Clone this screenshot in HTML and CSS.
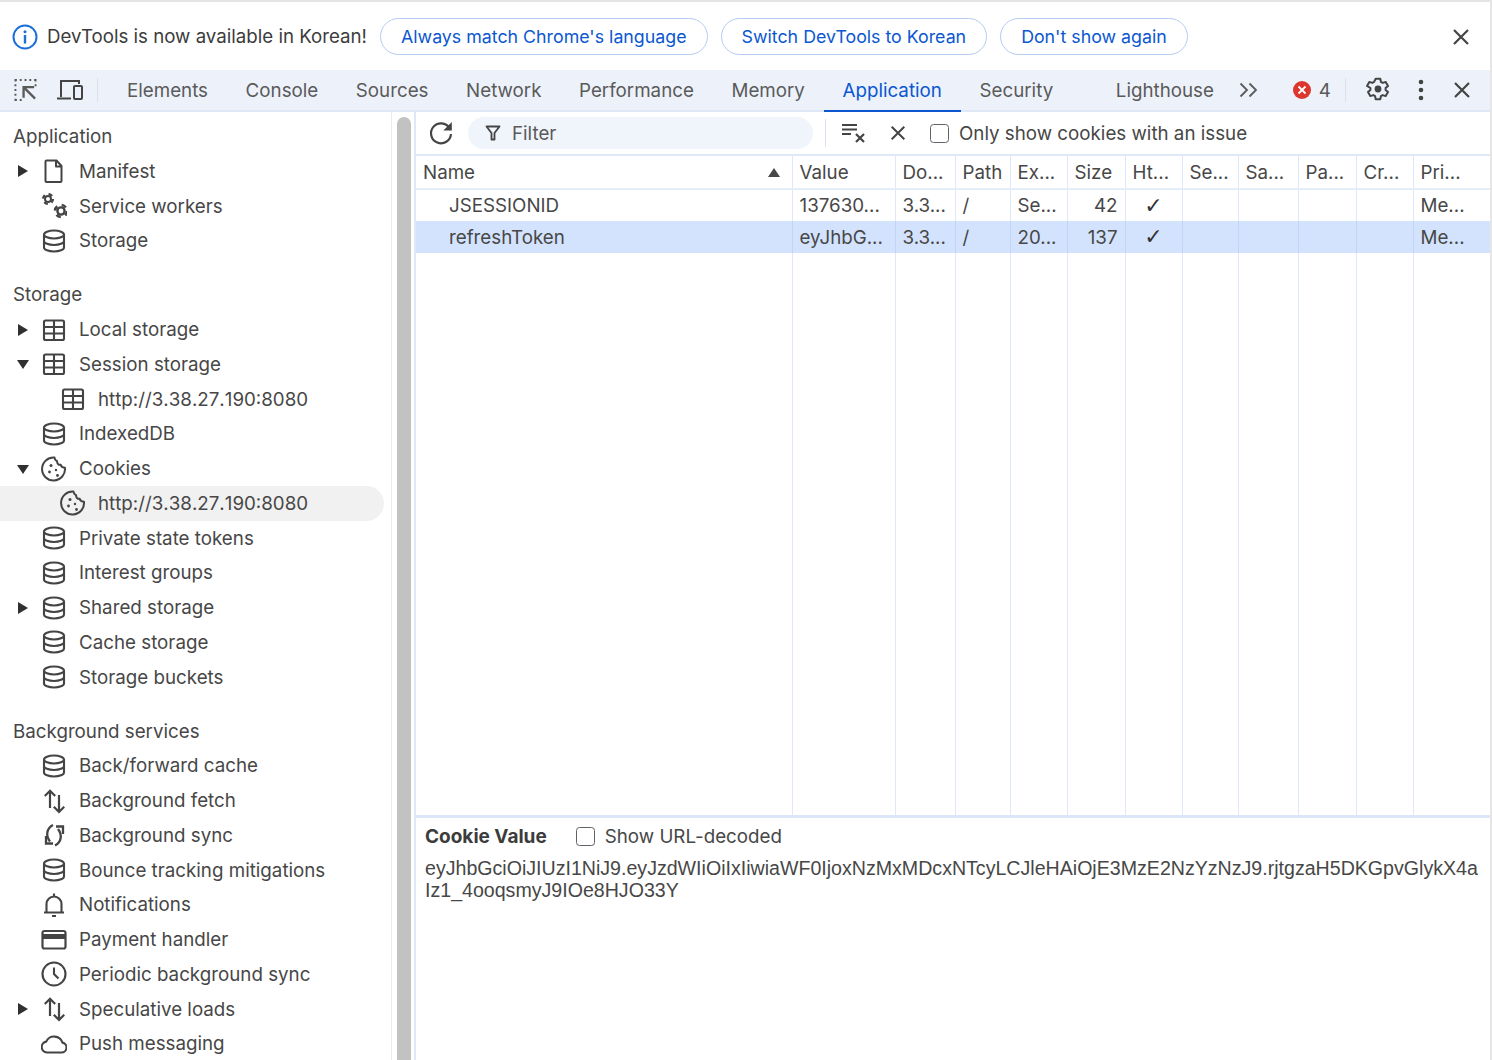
FILE: index.html
```html
<!DOCTYPE html>
<html lang="en">
<head>
<meta charset="utf-8">
<title>DevTools</title>
<link rel="stylesheet" href="styles.css">
</head>
<body>
<svg class="defs" width="0" height="0" aria-hidden="true">
  <symbol id="i-file" viewBox="0 0 26 26"><path d="M5.500 2.500h10l5 5.500v15a1 1 0 0 1-1 1h-14a1 1 0 0 1-1-1V3.500a1 1 0 0 1 1-1zM15 2.500V8.500h5.500" fill="none" stroke="currentColor" stroke-width="2" stroke-linejoin="round"/></symbol>
  <symbol id="i-gears" viewBox="0 0 26 26"><g fill="none" stroke="currentColor"><circle cx="7" cy="6" r="3" stroke-width="2"/><circle cx="7" cy="6" r="5" stroke-width="2.200" stroke-dasharray="3.900 3.950"/><circle cx="20" cy="18" r="3.600" stroke-width="2.400"/><circle cx="20" cy="18" r="6" stroke-width="2.600" stroke-dasharray="4.700 4.720"/></g></symbol>
  <symbol id="i-db" viewBox="0 0 26 26"><g fill="none" stroke="currentColor" stroke-width="2.100"><ellipse cx="13" cy="6.500" rx="10" ry="4"/><path d="M3 6.500v13c0 2.200 4.500 4 10 4s10-1.800 10-4v-13M3 13c0 2.200 4.500 4 10 4s10-1.800 10-4"/></g></symbol>
  <symbol id="i-table" viewBox="0 0 26 26"><g fill="none" stroke="currentColor" stroke-width="2.100"><rect x="3" y="3.500" width="20" height="19.500" rx="1.500"/><path d="M3 10h20M3 16.500h20M13 3.500V23"/></g></symbol>
  <symbol id="i-cookie" viewBox="0 0 26 26"><path d="M13.500 1.500c.2 2 .9 3 2.600 3.600-.2 2.400 1.400 4 3.600 3.700.5 1.900 2 3 4.300 3A11.500 11.500 0 1 1 13.500 1.500z" fill="none" stroke="currentColor" stroke-width="2" stroke-linejoin="round"/><g fill="currentColor"><circle cx="10" cy="9.500" r="1.500"/><circle cx="8.500" cy="16" r="1.400"/><circle cx="15" cy="14" r="1.200"/><circle cx="16.500" cy="19.500" r="1.400"/></g></symbol>
  <symbol id="i-updown" viewBox="0 0 26 26"><path d="M9 20V3M3.800 8 9 2.800 14.200 8M18 7v17M12.800 18.800 18 24l5.200-5.200" fill="none" stroke="currentColor" stroke-width="2.200"/></symbol>
  <symbol id="i-sync" viewBox="0 0 26 26"><g fill="none" stroke="currentColor" stroke-width="2.300"><path d="M12 3C5.500 6.500 4.500 13.500 9 19.500"/><path d="M5 14v7.500h7"/><path d="M14 23.500c6.500-3.500 7.500-10.500 3-16.500"/><path d="M22 12V4.500h-7"/></g></symbol>
  <symbol id="i-bell" viewBox="0 0 26 26"><path d="M5.500 20.500V12a7.500 7.500 0 0 1 15 0v8.500M3 20.500h20M13 1.500V4.500M11 24h4" fill="none" stroke="currentColor" stroke-width="2.100"/></symbol>
  <symbol id="i-card" viewBox="0 0 26 26"><rect x="1.500" y="4" width="23" height="17.500" rx="2" fill="none" stroke="currentColor" stroke-width="2.200"/><rect x="1.500" y="7" width="23" height="5" fill="currentColor"/></symbol>
  <symbol id="i-clock" viewBox="0 0 26 26"><circle cx="13" cy="13" r="11.500" fill="none" stroke="currentColor" stroke-width="2.100"/><path d="M13 6.500V13l4.500 4.500" fill="none" stroke="currentColor" stroke-width="2.100"/></symbol>
  <symbol id="i-cloud" viewBox="0 0 26 26"><path d="M6 21.500h14.500a5 5 0 0 0 1-9.900A8.800 8.800 0 0 0 5.200 10.600 5.500 5.500 0 0 0 6 21.500z" fill="none" stroke="currentColor" stroke-width="2.100"/></symbol>
  <symbol id="i-x" viewBox="0 0 20 20"><path d="M3 3l14 14M17 3 3 17" fill="none" stroke="currentColor" stroke-width="2.200"/></symbol>
</svg>

<div class="infobar">
  <svg class="info-icon" viewBox="0 0 26 26"><circle cx="13" cy="13" r="11.500" fill="none" stroke="currentColor" stroke-width="2"/><circle cx="13" cy="7.800" r="1.500" fill="currentColor"/><rect x="11.800" y="11" width="2.400" height="8.500" fill="currentColor"/></svg>
  <span class="info-text">DevTools is now available in Korean!</span>
  <button class="pill">Always match Chrome's language</button>
  <button class="pill">Switch DevTools to Korean</button>
  <button class="pill">Don't show again</button>
  <svg class="close info-close"><use href="#i-x"/></svg>
</div>

<div class="toolbar">
  <svg class="tool-inspect" viewBox="0 0 24 24"><path d="M1.500 3v-1.500H3M6 1.500h2M11 1.500h2M16 1.500h2M21 1.500h1.500V3M1.500 6v2M1.500 11v2M1.500 16v2M1.500 21v1.500H3M6 22.500h2M22.500 6v2" fill="none" stroke="currentColor" stroke-width="2"/><path d="M21 9H10v11M10.500 9.500 22 21" fill="none" stroke="currentColor" stroke-width="2.400"/></svg>
  <svg class="tool-device" viewBox="0 0 26 24"><path d="M4 19V3h18v3M0 20.500h14" fill="none" stroke="currentColor" stroke-width="2"/><rect x="17" y="8" width="8" height="13" rx="1" fill="none" stroke="currentColor" stroke-width="2"/></svg>
  <span class="vsep"></span>
  <nav class="tabs">
    <span class="tab">Elements</span>
    <span class="tab">Console</span>
    <span class="tab">Sources</span>
    <span class="tab">Network</span>
    <span class="tab">Performance</span>
    <span class="tab">Memory</span>
    <span class="tab active">Application</span>
    <span class="tab">Security</span>
    <span class="tab lighthouse">Lighthouse</span>
  </nav>
  <svg class="chevrons" viewBox="0 0 20 16"><path d="M1.500 1.500 8 8l-6.500 6.500M10.500 1.500 17 8l-6.500 6.500" fill="none" stroke="currentColor" stroke-width="1.800"/></svg>
  <svg class="err-icon" viewBox="0 0 18 18"><circle cx="9" cy="9" r="9" fill="#dc362e"/><path d="M5.500 5.500l7 7M12.500 5.500l-7 7" stroke="#fff" stroke-width="1.800"/></svg>
  <span class="err-count">4</span>
  <span class="vsep vsep-right"></span>
  <svg class="gear" viewBox="0 0 26 26"><path d="M10.700 1.800h4.600l.6 3.100 1.800 1 3-1 2.300 4-2.400 2.100v2l2.400 2.100-2.300 4-3-1-1.800 1-.6 3.100h-4.600l-.6-3.100-1.800-1-3 1-2.300-4 2.400-2.100v-2L2 8.900l2.300-4 3 1 1.800-1z" fill="none" stroke="currentColor" stroke-width="2" stroke-linejoin="round"/><circle cx="13" cy="12" r="3.400" fill="currentColor"/></svg>
  <svg class="dots" viewBox="0 0 6 22"><circle cx="3" cy="3" r="2.300" fill="currentColor"/><circle cx="3" cy="11" r="2.300" fill="currentColor"/><circle cx="3" cy="19" r="2.300" fill="currentColor"/></svg>
  <svg class="close tool-close"><use href="#i-x"/></svg>
</div>

<div class="workspace">
  <aside class="sidebar">
    <div class="tree">
      <section class="group">
        <h2 class="group-title">Application</h2>
        <div class="row"><span class="tri right"></span><svg class="ico"><use href="#i-file"/></svg><span>Manifest</span></div>
        <div class="row"><svg class="ico"><use href="#i-gears"/></svg><span>Service workers</span></div>
        <div class="row"><svg class="ico"><use href="#i-db"/></svg><span>Storage</span></div>
      </section>
      <section class="group">
        <h2 class="group-title">Storage</h2>
        <div class="row"><span class="tri right"></span><svg class="ico"><use href="#i-table"/></svg><span>Local storage</span></div>
        <div class="row"><span class="tri down"></span><svg class="ico"><use href="#i-table"/></svg><span>Session storage</span></div>
        <div class="row nested"><svg class="ico"><use href="#i-table"/></svg><span class="url">http://3.38.27.190:8080</span></div>
        <div class="row"><svg class="ico"><use href="#i-db"/></svg><span>IndexedDB</span></div>
        <div class="row"><span class="tri down"></span><svg class="ico"><use href="#i-cookie"/></svg><span>Cookies</span></div>
        <div class="row nested selected"><svg class="ico"><use href="#i-cookie"/></svg><span class="url">http://3.38.27.190:8080</span></div>
        <div class="row"><svg class="ico"><use href="#i-db"/></svg><span>Private state tokens</span></div>
        <div class="row"><svg class="ico"><use href="#i-db"/></svg><span>Interest groups</span></div>
        <div class="row"><span class="tri right"></span><svg class="ico"><use href="#i-db"/></svg><span>Shared storage</span></div>
        <div class="row"><svg class="ico"><use href="#i-db"/></svg><span>Cache storage</span></div>
        <div class="row"><svg class="ico"><use href="#i-db"/></svg><span>Storage buckets</span></div>
      </section>
      <section class="group">
        <h2 class="group-title">Background services</h2>
        <div class="row"><svg class="ico"><use href="#i-db"/></svg><span>Back/forward cache</span></div>
        <div class="row"><svg class="ico"><use href="#i-updown"/></svg><span>Background fetch</span></div>
        <div class="row"><svg class="ico"><use href="#i-sync"/></svg><span>Background sync</span></div>
        <div class="row"><svg class="ico"><use href="#i-db"/></svg><span>Bounce tracking mitigations</span></div>
        <div class="row"><svg class="ico"><use href="#i-bell"/></svg><span>Notifications</span></div>
        <div class="row"><svg class="ico"><use href="#i-card"/></svg><span>Payment handler</span></div>
        <div class="row"><svg class="ico"><use href="#i-clock"/></svg><span>Periodic background sync</span></div>
        <div class="row"><span class="tri right"></span><svg class="ico"><use href="#i-updown"/></svg><span>Speculative loads</span></div>
        <div class="row"><svg class="ico"><use href="#i-cloud"/></svg><span>Push messaging</span></div>
      </section>
    </div>
    <div class="scroll"><div class="thumb"></div></div>
  </aside>

  <main class="main">
    <div class="filterbar">
      <svg class="reload" viewBox="0 0 26 26"><path d="M21.500 8A10 10 0 1 0 23 14" fill="none" stroke="currentColor" stroke-width="2.200"/><path d="M23.800 2v8.500h-8.500z" fill="currentColor"/></svg>
      <div class="filter-input">
        <svg class="funnel" viewBox="0 0 16 16"><path d="M1.500 1.500h13L9.500 8v6.500h-3V8z" fill="none" stroke="currentColor" stroke-width="1.800" stroke-linejoin="round"/></svg>
        <span>Filter</span>
      </div>
      <span class="vsep vsep-filter"></span>
      <svg class="clear-filter" viewBox="0 0 24 20"><path d="M0 2h15M0 6.500h15M0 11h9" fill="none" stroke="currentColor" stroke-width="2"/><path d="M14 11l8 8M22 11l-8 8" fill="none" stroke="currentColor" stroke-width="2.200"/></svg>
      <svg class="close clear-x"><use href="#i-x"/></svg>
      <label class="check"><span class="box"></span>Only show cookies with an issue</label>
    </div>

    <div class="grid-wrap">
      <table class="cookies">
        <colgroup>
          <col class="c-name"><col class="c-value"><col class="c-do"><col class="c-path"><col class="c-ex"><col class="c-size"><col class="c-ht"><col class="c-se"><col class="c-sa"><col class="c-pa"><col class="c-cr"><col class="c-pri">
        </colgroup>
        <thead>
          <tr>
            <th class="name-head">Name<span class="sort"></span></th>
            <th>Value</th><th>Do...</th><th>Path</th><th>Ex...</th><th>Size</th><th>Ht...</th><th>Se...</th><th>Sa...</th><th>Pa...</th><th>Cr...</th><th>Pri...</th>
          </tr>
        </thead>
        <tbody>
          <tr>
            <td class="name">JSESSIONID</td><td>137630...</td><td>3.3...</td><td>/</td><td>Se...</td><td class="num">42</td><td class="tick">✓</td><td></td><td></td><td></td><td></td><td>Me...</td>
          </tr>
          <tr class="sel">
            <td class="name">refreshToken</td><td>eyJhbG...</td><td>3.3...</td><td>/</td><td>20...</td><td class="num">137</td><td class="tick">✓</td><td></td><td></td><td></td><td></td><td>Me...</td>
          </tr>
          <tr class="filler"><td></td><td></td><td></td><td></td><td></td><td></td><td></td><td></td><td></td><td></td><td></td><td></td></tr>
        </tbody>
      </table>
    </div>

    <div class="detail">
      <div class="detail-head"><strong>Cookie Value</strong><label class="check"><span class="box"></span>Show URL-decoded</label></div>
      <p class="detail-value">eyJhbGciOiJIUzI1NiJ9.eyJzdWIiOiIxIiwiaWF0IjoxNzMxMDcxNTcyLCJleHAiOjE3MzE2NzYzNzJ9.rjtgzaH5DKGpvGlykX4aIz1_4ooqsmyJ9IOe8HJO33Y</p>
    </div>
  </main>
</div>
</body>
</html>
```

FILE: styles.css
```css
* { box-sizing: border-box; }
html, body { margin: 0; height: 100%; overflow: hidden; }
body {
  display: flex;
  flex-direction: column;
  height: 1060px;
  background: #fff;
  color: #474747;
  font-family: Inter, "Liberation Sans", sans-serif;
  font-size: 18.750px;
  border-top: 2px solid #e4e4e4;
  border-right: 2px solid #e6e6e6;
}
.defs { position: absolute; }

/* info bar */
.infobar {
  flex: 0 0 68px;
  display: flex;
  align-items: center;
  padding: 1px 0 0 12px;
  color: #3c3c3c;
}
.info-icon { width: 26px; height: 26px; color: #1a6fd8; flex: none; }
.info-text { margin: 0 13px 0 9px; font-size: 18.700px; white-space: nowrap; }
.pill {
  height: 37px;
  margin-right: 13px;
  padding: 0 20px;
  border: 1.500px solid #b4cbf3;
  border-radius: 19px;
  background: #fff;
  color: #0b57d0;
  font: inherit;
  font-size: 17.800px;
  white-space: nowrap;
}
.close { width: 20px; height: 20px; color: #444; flex: none; }
.info-close { margin-left: auto; margin-right: 19px; }

/* main toolbar */
.toolbar {
  flex: 0 0 42px;
  display: flex;
  align-items: center;
  background: #edf2fa;
  border-bottom: 2px solid #dfe8f7;
  color: #5a5a5a;
  padding-left: 14px;
}
.tool-inspect { width: 23px; height: 24px; flex: none; }
.tool-device { width: 26px; height: 24px; margin-left: 20px; flex: none; color: #444; }
.vsep { width: 1px; height: 24px; background: #d8e2f2; margin-left: 14px; flex: none; }
.tabs { display: flex; align-items: stretch; height: 100%; margin-left: 10.200px; }
.tab {
  display: flex;
  align-items: center;
  padding: 0 18.800px;
  margin-bottom: -2px;
  white-space: nowrap;
  border-bottom: 2px solid transparent;
}
.tab.active { color: #0b57d0; border-bottom-color: #0b57d0; }
.tab.lighthouse { margin-left: 25px; }
.chevrons { width: 20px; height: 16px; margin-left: 6px; flex: none; }
.err-icon { width: 18px; height: 18px; margin-left: 34px; flex: none; }
.err-count { margin-left: 8px; }
.vsep-right { margin-left: 14px; }
.gear { width: 26px; height: 26px; margin-left: 19.500px; color: #444; flex: none; }
.dots { width: 6px; height: 22px; margin-left: 27px; color: #444; flex: none; }
.tool-close { margin-left: 28px; }

/* workspace */
.workspace { flex: 1; min-height: 0; display: flex; }
.sidebar { flex: 0 0 416px; display: flex; border-right: 2px solid #dfe8f7; overflow: hidden; }
.tree { flex: 0 0 392px; border-right: 1px solid #ececec; padding-top: 7px; overflow: hidden; }
.group { margin-bottom: 19px; }
.group-title {
  margin: 0;
  height: 35px;
  display: flex;
  align-items: center;
  padding-left: 13px;
  font-size: 18.750px;
  font-weight: 400;
  color: #474747;
}
.row {
  position: relative;
  height: 34.750px;
  display: flex;
  align-items: center;
  padding-left: 41px;
  margin-right: 7px;
  white-space: nowrap;
}
.ico { width: 26px; height: 26px; margin-right: 12px; flex: none; color: #444; }
.row.nested { padding-left: 60px; }
.row.selected { background: #f1f1f1; border-radius: 0 18px 18px 0; }
.url { font-kerning: none; }
.tri { position: absolute; left: 17px; top: 50%; width: 0; height: 0; border-style: solid; border-color: transparent; }
.tri.right { margin-top: -6px; border-width: 6px 0 6px 10px; border-left-color: #303030; left: 18px; }
.tri.down { margin-top: -4px; border-width: 9px 6px 0 6px; border-top-color: #303030; }
.scroll { flex: 1; padding: 5px 3px 0 5px; }
.thumb { height: 100%; background: #c2c2c2; border-radius: 7px 7px 0 0; }

/* main */
.main { flex: 1; min-width: 0; display: flex; flex-direction: column; }
.filterbar { flex: 0 0 44px; display: flex; align-items: center; border-bottom: 2px solid #dfe8f7; }
.reload { width: 26px; height: 26px; margin-left: 12px; flex: none; color: #444; }
.filter-input {
  display: flex;
  align-items: center;
  width: 345px;
  height: 32px;
  margin-left: 14px;
  padding-left: 17px;
  background: #f0f4fb;
  border-radius: 16px;
  color: #5a5a5a;
}
.funnel { width: 16px; height: 16px; margin-right: 11px; color: #444; }
.vsep-filter { height: 28px; margin-left: 12px; }
.clear-filter { width: 24px; height: 20px; margin-left: 16px; color: #444; flex: none; }
.clear-x { width: 18px; height: 18px; margin-left: 23px; }
.check { display: flex; align-items: center; white-space: nowrap; }
.filterbar .check { margin-left: 23px; }
.box { width: 19px; height: 19px; margin-right: 10px; border: 1.500px solid #5f6368; border-radius: 3.500px; background: #fff; flex: none; }

.grid-wrap { flex: 0 0 662px; display: flex; border-bottom: 3px solid #dbe6f8; }
.cookies { width: 100%; height: 100%; table-layout: fixed; border-collapse: collapse; font-size: 18.750px; }
.c-name { width: 376px; } .c-value { width: 103px; } .c-do { width: 60px; } .c-path { width: 55px; }
.c-ex { width: 57px; } .c-size { width: 58px; } .c-ht { width: 57px; } .c-se { width: 56px; }
.c-sa { width: 60px; } .c-pa { width: 58px; } .c-cr { width: 57px; } .c-pri { width: auto; }
.cookies th, .cookies td {
  padding: 0 0 0 7px;
  border-left: 1px solid #dfe8f8;
  text-align: left;
  font-weight: 400;
  white-space: nowrap;
  overflow: hidden;
}
.cookies th:first-child, .cookies td:first-child { border-left: 0; }
.cookies thead tr { height: 33px; }
.cookies th { border-bottom: 2px solid #e4ecfa; position: relative; }
.cookies tbody tr { height: 32px; }
.cookies tbody tr.filler { height: auto; }
.cookies td.name { padding-left: 33px; }
.cookies td.num { text-align: right; padding-right: 7px; }
.cookies td.tick { text-align: center; padding: 0; font-family: "DejaVu Sans", sans-serif; font-size: 22px; line-height: 1; color: #333; }
.sel td { background: #d3e3fd; border-left-color: #c2d5f5; }
.sort {
  position: absolute;
  right: 12px;
  top: 12px;
  width: 0;
  height: 0;
  border-style: solid;
  border-width: 0 6px 9px 6px;
  border-color: transparent transparent #474747 transparent;
}

.detail { flex: 1; min-height: 0; padding: 5px 12px 0 9px; }
.detail-head { display: flex; align-items: center; height: 26px; }
.detail-head strong { font-weight: 700; font-size: 19px; color: #3c3c3c; }
.detail-head .check { margin-left: 29px; }
.detail-value {
  margin: 8px 0 0;
  font-family: "Liberation Sans", Arial, sans-serif;
  font-size: 19.600px;
  line-height: 22px;
  word-break: break-all;
  color: #474747;
}
```
